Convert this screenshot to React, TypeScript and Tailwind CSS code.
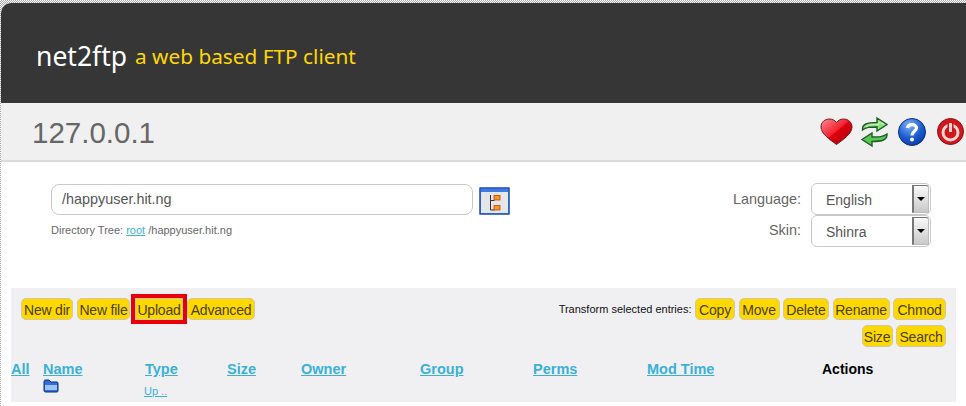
const sans = "font-['Liberation_Sans',Arial,sans-serif]";

function Btn({ label, w, red }: { label: string; w: string; red?: boolean }) {
  return (
    <span
      className={`inline-flex h-[22px] items-center justify-center bg-[#ffd800] pt-[2px] text-[14px] tracking-[-0.2px] text-[#4a3f10] border border-[#cfc9a8] ${w} ${
        red ? "outline-[4px] outline-[#e8000d]" : "rounded-[5px]"
      }`}
    >
      {label}
    </span>
  );
}

function HeaderIcons() {
  return (
    <div className="mr-[2px] flex items-center">
      <svg width="33" height="28" viewBox="0 0 33 28">
        <defs>
          <linearGradient id="heart" x1="0" y1="0" x2="1" y2="1">
            <stop offset="0" stopColor="#ff8a92" />
            <stop offset="0.48" stopColor="#f4202e" />
            <stop offset="0.5" stopColor="#e00010" />
            <stop offset="1" stopColor="#a00008" />
          </linearGradient>
        </defs>
        <path d="M16.5 26.500C10 21.500 1 16 1 9 1 4 5 1 9.500 1 12.500 1 15 2.500 16.500 4.500 18 2.500 20.500 1 23.500 1 28 1 32 4 32 9 32 16 23 21.500 16.500 26.500Z" fill="url(#heart)" stroke="#6d1a1e" />
      </svg>
      <svg className="ml-[7px]" width="29" height="32" viewBox="0 0 29 32">
        <path d="M2.500 14C2 8 7 6.500 17 6.500V2L27 8.500 17 15V11C10 11 6 11 2.500 14Z" fill="#8fe076" stroke="#1d5b2d" strokeWidth="1.400" />
        <path d="M6 11C9 8.500 12 8.500 19 8.500V6L24 8.500" fill="none" stroke="#d6f6c8" />
        <path d="M27 18C27.500 24 22 25.500 12 25.500V30L2 23.500 12 17V21C19 21 23 21 27 18Z" fill="#5cc84f" stroke="#1d5b2d" strokeWidth="1.400" />
      </svg>
      <svg className="ml-[9px]" width="28" height="28" viewBox="0 0 28 28">
        <defs>
          <radialGradient id="qb" cx="0.4" cy="0.25" r="0.85">
            <stop offset="0" stopColor="#7fb2f5" />
            <stop offset="0.55" stopColor="#1c5cd0" />
            <stop offset="1" stopColor="#0a3298" />
          </radialGradient>
        </defs>
        <circle cx="14" cy="14" r="13.500" fill="url(#qb)" stroke="#0d2f80" />
        <path d="M9.500 10C10 5.500 18.500 5.500 18.500 10 18.500 13 14 13.500 14 17.500" fill="none" stroke="#fff" strokeWidth="3.200" />
        <circle cx="14" cy="21.500" r="2" fill="#fff" />
      </svg>
      <svg className="ml-[11px]" width="27" height="27" viewBox="0 0 27 27">
        <circle cx="13.500" cy="13.500" r="13" fill="#cf171c" stroke="#8c1013" />
        <circle cx="13.500" cy="14.500" r="7.500" fill="none" stroke="#f6d5d0" strokeWidth="3" />
        <path d="M13.500 4V14" stroke="#cf171c" strokeWidth="6" />
        <path d="M13.500 5V14" stroke="#f6d5d0" strokeWidth="3" />
      </svg>
    </div>
  );
}

function TreeButton() {
  return (
    <svg width="31" height="28" viewBox="0 0 31 28" className="mt-[3px] shrink-0">
      <rect x="0.500" y="0.500" width="30" height="27" fill="#1a48ac" />
      <rect x="1" y="1" width="29" height="26" fill="#3f7be0" stroke="#1a48ac" />
      <rect x="2" y="5" width="27" height="21" fill="#e4e6ea" />
      <path d="M11.500 8V23H15.500M11.500 13.500H15.500" fill="none" stroke="#333" />
      <rect x="15" y="8.500" width="6" height="4.500" fill="#f29a1e" stroke="#c8401a" strokeWidth="0.800" />
      <rect x="15" y="18.500" width="6" height="4.500" fill="#f29a1e" stroke="#c8401a" strokeWidth="0.800" />
    </svg>
  );
}

function SelectBox({ value }: { value: string }) {
  return (
    <div className="flex h-[32px] w-[120px] items-stretch rounded-[6px] border border-[#c8c8c8] bg-white">
      <span className="flex-1 pl-[14px] text-[14px] leading-[32px] text-[#555]">{value}</span>
      <span className="my-px mr-px flex w-[17px] items-center justify-center rounded-tr-[3px] border-t border-l-2 border-r border-b border-t-[#777] border-l-[#777] border-r-[#bbb] border-b-[#bbb] bg-gradient-to-b from-[#fafafa] to-[#c8c8c8]">
        <span className="border-x-[4px] border-t-[4px] border-x-transparent border-t-black" />
      </span>
    </div>
  );
}

const cols = [
  { label: "Name", w: "w-[102px]" },
  { label: "Type", w: "w-[82px]" },
  { label: "Size", w: "w-[74px]" },
  { label: "Owner", w: "w-[119px]" },
  { label: "Group", w: "w-[113px]" },
  { label: "Perms", w: "w-[114px]" },
  { label: "Mod Time", w: "w-[175px]" },
];

export default function App() {
  return (
    <div className={`h-[406px] w-[966px] overflow-hidden bg-[repeating-conic-gradient(#aaa_0_25%,#fff_0_50%)] bg-[length:2px_2px] pl-px pt-[3px] ${sans}`}>
      <div className="h-[403px] overflow-hidden rounded-tl-[10px] bg-white">
        <div className="flex h-[100px] items-center bg-[#363636] pl-[35px] pt-[8px] font-['Noto_Sans',sans-serif]">
          <span className="text-[26.500px] text-white">net2ftp</span>
          <span className="ml-[8px] text-[20.800px] text-[#ffd800]">a web based FTP client</span>
        </div>
        <div className="flex h-[59px] items-center justify-between border-b-2 border-[#dcdcdc] bg-[#f0f0f0] pl-[31px]">
          <span className="pt-[4px] text-[29.500px] text-[#666]">127.0.0.1</span>
          <HeaderIcons />
        </div>
        <div className="flex h-[126px] justify-between pl-[50px] pr-[35px] pt-[22px]">
          <div>
            <div className="flex items-start gap-[6px]">
              <div className="flex h-[31px] w-[422px] items-center rounded-[8px] border border-[#c8c8c8] pl-[10px] text-[14.400px] text-[#555]">/happyuser.hit.ng</div>
              <TreeButton />
            </div>
            <div className="mt-[7px] text-[11px] text-[#666]">
              Directory Tree: <span className="text-[#3bb0d8] underline">root</span> /happyuser.hit.ng
            </div>
          </div>
          <div className="-mt-px grid grid-cols-[auto_auto] content-start items-center justify-end gap-x-[10px] text-[14.400px] text-[#666]">
            <span className="pt-px text-right">Language:</span>
            <SelectBox value="English" />
            <span className="text-right">Skin:</span>
            <SelectBox value="Shinra" />
          </div>
        </div>
        <div className="ml-[10px] h-[114px] w-[945px] bg-[#f0f0f2]">
          <div className="flex justify-between px-[10px] pt-[10px]">
            <div className="flex gap-[4px]">
              <Btn label="New dir" w="w-[52px]" />
              <Btn label="New file" w="w-[53px]" />
              <span className="ml-[1px] flex">
                <Btn label="Upload" w="w-[48px]" red />
              </span>
              <Btn label="Advanced" w="w-[68px]" />
            </div>
            <div className="flex flex-col items-end gap-[5px]">
              <div className="flex items-center gap-[3.500px]">
                <span className="text-[11px] text-[#111]">Transform selected entries:</span>
                <Btn label="Copy" w="w-[40px]" />
                <Btn label="Move" w="w-[41px]" />
                <Btn label="Delete" w="w-[46px]" />
                <Btn label="Rename" w="w-[57px]" />
                <Btn label="Chmod" w="w-[53px]" />
              </div>
              <div className="flex gap-[3.500px]">
                <Btn label="Size" w="w-[31px]" />
                <Btn label="Search" w="w-[50px]" />
              </div>
            </div>
          </div>
          <div className="mt-[12px] flex text-[14.500px] font-bold leading-[20px]">
            <span className="w-[32px] text-[#3bb0d8] underline">All</span>
            {cols.map((c) => (
              <span key={c.label} className={`${c.w} text-[#3bb0d8] underline`}>
                {c.label}
              </span>
            ))}
            <span className="text-[14px] text-black">Actions</span>
          </div>
          <div className="flex">
            <span className="ml-[32px] w-[101px]">
              <svg width="16" height="14" viewBox="0 0 16 14">
                <path d="M1 2.500C1 1 2 1 3 1H6L8 3H14C15 3 15 4 15 5V12C15 13 14 13 13 13H3C1 13 1 12 1 11Z" fill="#2f6fdc" stroke="#0c2a70" />
                <path d="M2 6H14V11H2Z" fill="#9cc3f5" />
              </svg>
            </span>
            <span className="pt-[4px] text-[11px] text-[#3bb0d8] underline">Up ..</span>
          </div>
        </div>
      </div>
    </div>
  );
}
